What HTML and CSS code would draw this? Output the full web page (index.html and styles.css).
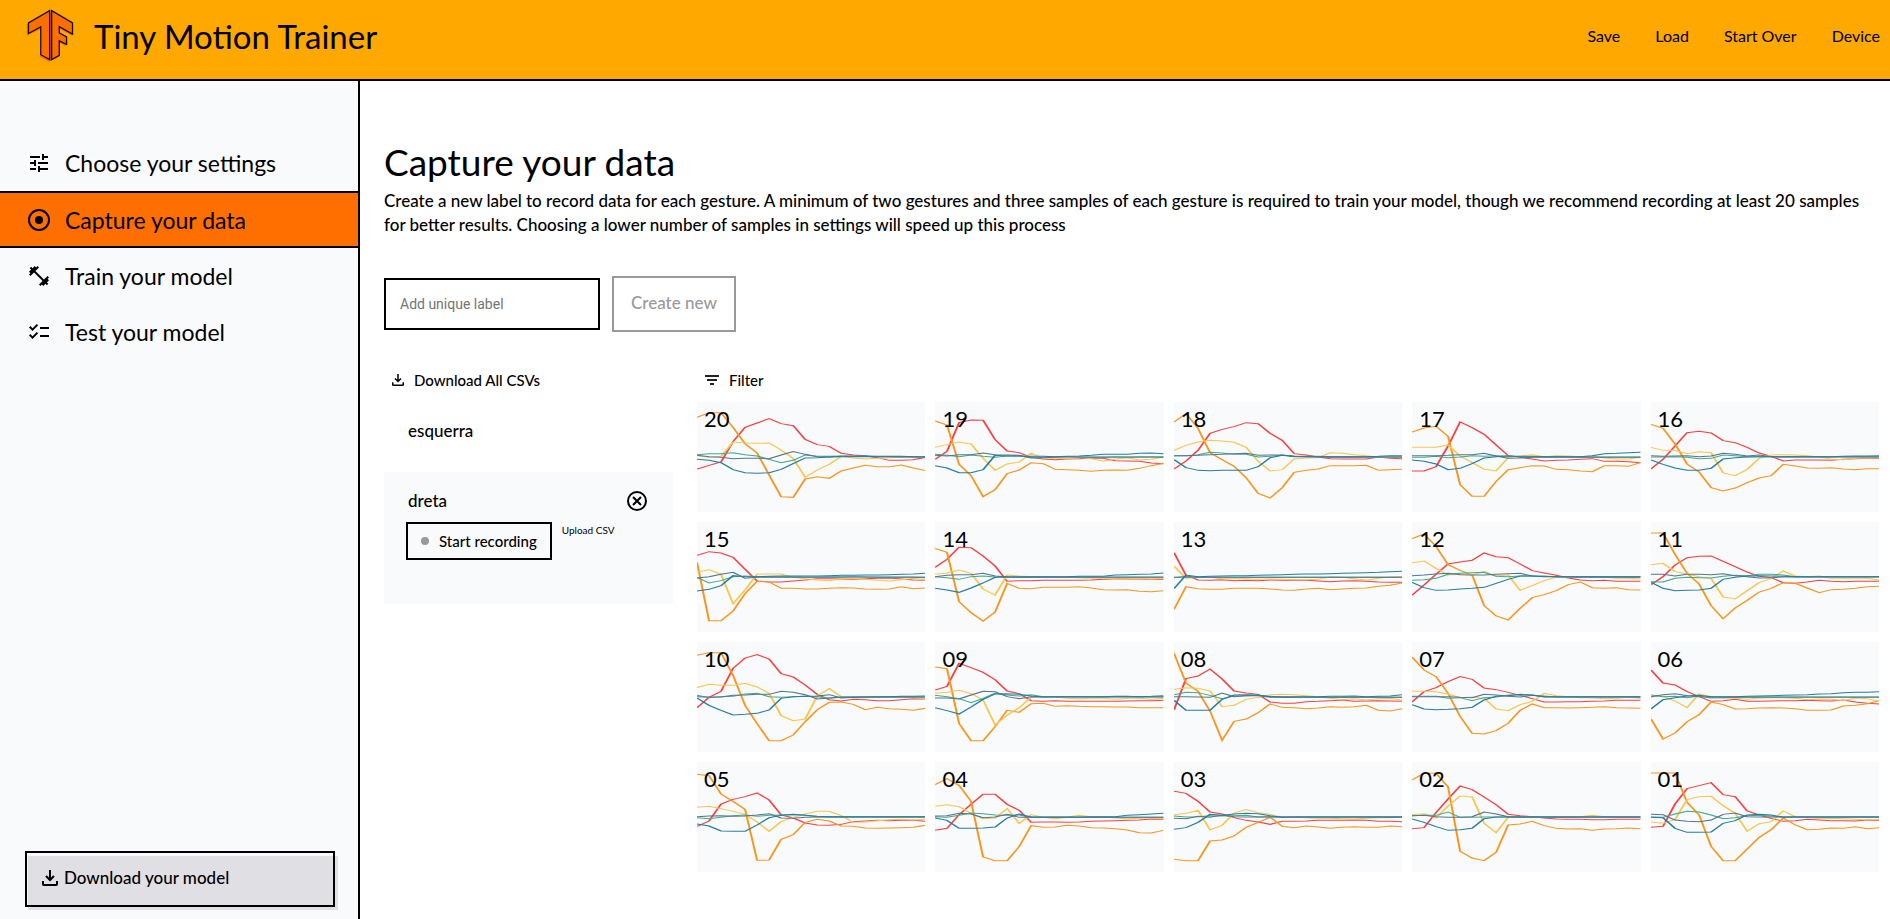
FILE: index.html
```html
<!DOCTYPE html>
<html lang="en">
<head>
<meta charset="utf-8">
<meta name="viewport" content="width=device-width, initial-scale=1">
<title>Tiny Motion Trainer</title>
<link rel="stylesheet" href="styles.css">
</head>
<body>
<svg class="sprite" aria-hidden="true">
  <symbol id="download" viewBox="0 0 16 16">
    <path d="M8 0v9M4 6l4 4 4-4M1 11v3.2q0 .8.8.8h12.4q.8 0 .8-.8V11" fill="none" stroke="currentColor" stroke-width="2"/>
  </symbol>
</svg>
<header class="topbar">
  <a class="brand" href="#">
    <svg class="logo" viewBox="78 24 144 160" aria-hidden="true">
      <g fill="#ff6f00" transform="translate(-2 5)">
        <path d="M150 28L82 66v34l40-20v84l28 14z"/>
        <path d="M150 28l68 38v34l-40-22v18l22 12v23l-22-11v44l-28 14z"/>
      </g>
      <g fill="#ff6f00" stroke="#1a0d00" stroke-width="4" stroke-linejoin="miter">
        <path d="M149 29L85 66v32l37-20v84l27 15z"/>
        <path d="M155 29l63 37v34l-40-23v19l22 12v23l-22-11v44l-23 13z"/>
      </g>
    </svg>
    <span class="brand-name">Tiny Motion Trainer</span>
  </a>
  <nav class="topnav" aria-label="Project">
    <a href="#">Save</a>
    <a href="#">Load</a>
    <a href="#">Start Over</a>
    <a href="#">Device</a>
  </nav>
</header>
<div class="layout">
  <aside class="sidebar">
    <nav class="steps" aria-label="Steps">
      <a class="step" href="#">
        <svg class="step-icon" viewBox="0 0 24 24" aria-hidden="true"><path d="M3 17v2h6v-2H3zM3 5v2h10V5H3zm10 16v-2h8v-2h-8v-2h-2v6h2zM7 9v2H3v2h4v2h2V9H7zm14 4v-2H11v2h10zm-6-4h2V7h4V5h-4V3h-2v6z"/></svg>
        Choose your settings
      </a>
      <a class="step step-active" href="#" aria-current="step">
        <svg class="step-icon" viewBox="0 0 24 24" aria-hidden="true"><circle cx="12" cy="12" r="10" fill="none" stroke="currentColor" stroke-width="2"/><circle cx="12" cy="12" r="4"/></svg>
        Capture your data
      </a>
      <a class="step" href="#">
        <svg class="step-icon" viewBox="0 0 24 24" aria-hidden="true"><path d="M20.57 14.86L22 13.43 20.57 12 17 15.57 8.43 7 12 3.43 10.57 2 9.14 3.43 7.71 2 5.57 4.14 4.14 2.71 2.71 4.14l1.43 1.43L2 7.71l1.43 1.43L2 10.57 3.43 12 7 8.43 15.57 17 12 20.57 13.43 22l1.43-1.43L16.29 22l2.14-2.14 1.43 1.43 1.43-1.43-1.43-1.43L22 16.29z"/></svg>
        Train your model
      </a>
      <a class="step" href="#">
        <svg class="step-icon" viewBox="0 0 24 24" aria-hidden="true"><path d="M22 7h-9v2h9V7zM22 15h-9v2h9v-2zM5.54 11L2 7.46l1.41-1.41 2.12 2.12 4.24-4.24 1.41 1.41L5.54 11zM5.54 19L2 15.46l1.41-1.41 2.12 2.12 4.24-4.24 1.41 1.41L5.54 19z"/></svg>
        Test your model
      </a>
    </nav>
    <div class="model-download">
      <button class="model-button" type="button"><svg class="icon-16" aria-hidden="true"><use href="#download"/></svg>Download your model</button>
    </div>
  </aside>
  <main class="content">
    <h1>Capture your data</h1>
    <p class="intro">Create a new label to record data for each gesture. A minimum of two gestures and three samples of each gesture is required to train your model, though we recommend recording at least 20 samples for better results. Choosing a lower number of samples in settings will speed up this process</p>
    <form class="label-form">
      <input class="label-input" type="text" placeholder="Add unique label" aria-label="Add unique label">
      <button class="create-button" type="button" disabled>Create new</button>
    </form>
    <div class="capture">
      <section class="labels">
        <button class="tool-button" type="button"><svg class="icon-12" aria-hidden="true"><use href="#download"/></svg>Download All CSVs</button>
        <div class="label-row"><h2>esquerra</h2></div>
        <div class="label-row label-selected">
          <div class="label-head">
            <h2>dreta</h2>
            <button class="close-button" type="button" aria-label="Delete label">
              <svg viewBox="0 0 20 20" aria-hidden="true"><circle cx="10" cy="10" r="9"/><path d="M6 6l8 8M14 6l-8 8"/></svg>
            </button>
          </div>
          <div class="label-actions">
            <button class="record-button" type="button"><span class="record-dot"></span>Start recording</button>
            <button class="upload-button" type="button">Upload CSV</button>
          </div>
        </div>
      </section>
      <section class="recordings">
        <button class="tool-button" type="button"><svg class="filter-icon" viewBox="0 0 14 10" aria-hidden="true"><path d="M0 1h14M2 5h10M5 9h4"/></svg>Filter</button>
        <div class="samples" id="samples"></div>
      </section>
    </div>
  </main>
</div>
<script src="samples.js"></script>
</body>
</html>
```
FILE: styles.css
```css
* { box-sizing: border-box; }
body {
  margin: 0;
  min-height: 100vh;
  display: flex;
  flex-direction: column;
  background: #fff;
  color: #000;
  font-family: Lato, "Open Sans", sans-serif;
  font-size: 17px;
  line-height: 24px;
}
a { color: inherit; text-decoration: none; }
button, input { font: inherit; color: inherit; }
button { background: none; border: 0; padding: 0; cursor: pointer; }
h1, h2, p { margin: 0; }
.sprite { position: absolute; width: 0; height: 0; }

.topbar {
  display: flex;
  align-items: center;
  justify-content: space-between;
  height: 81px;
  padding: 0 10px 8px 26px;
  background: #ffa800;
  border-bottom: 2px solid #000;
}
.brand { display: flex; align-items: center; gap: 20px; }
.logo { width: 48px; height: 53px; }
.brand-name { font-size: 33px; line-height: 40px; }
.topnav { display: flex; gap: 35px; font-size: 16px; }

.layout { flex: 1; display: flex; }
.sidebar {
  flex: none;
  width: 360px;
  display: flex;
  flex-direction: column;
  justify-content: space-between;
  padding: 54px 0 12px;
  background: #f8fafc;
  border-right: 2px solid #000;
}
.step {
  display: flex;
  align-items: center;
  gap: 14px;
  min-height: 56px;
  padding-left: 27px;
  font-size: 23px;
  line-height: 28px;
}
.step-icon { width: 24px; height: 24px; fill: currentColor; }
.step-active {
  min-height: 57px;
  background: #ff6f00;
  border: solid #000;
  border-width: 2px 0;
}
.model-download { position: relative; z-index: 0; margin: 0 23px 0 25px; }
.model-download::before {
  content: "";
  position: absolute;
  z-index: -1;
  inset: 5px -3px -3px 3px;
  background: #e0dfe4;
}
.model-button {
  display: flex;
  align-items: center;
  gap: 6px;
  width: 100%;
  height: 56px;
  padding: 0 15px 2px;
  border: 2px solid #000;
  font-weight: 500;
}
.icon-16 { width: 16px; height: 16px; }
.icon-12 { width: 12px; height: 12px; }

.content { flex: 1; min-width: 0; padding: 57px 11px 40px 24px; }
h1 { font-size: 37px; line-height: 48px; font-weight: 400; }
.intro { margin-top: 3px; font-weight: 500; }
.label-form { display: flex; align-items: center; gap: 12px; margin-top: 39px; }
.label-input {
  width: 216px;
  height: 52px;
  padding: 0 14px;
  border: 2px solid #000;
  background: #fff;
  font-family: Roboto, sans-serif;
  font-size: 14px;
}
.label-input::placeholder { color: #757575; opacity: 1; }
.create-button {
  height: 56px;
  padding: 0 17px 2px;
  border: 2px solid #999;
  color: #999;
  font-weight: 500;
}

.capture {
  display: grid;
  grid-template-columns: 289px minmax(0, 1fr);
  gap: 24px;
  margin-top: 36px;
}
.tool-button {
  display: flex;
  align-items: center;
  gap: 10px;
  height: 24px;
  margin-bottom: 10px;
  padding-left: 8px;
  font-size: 15px;
  font-weight: 500;
}
.label-row { height: 70px; padding: 17px 24px; }
.label-row h2 { font-size: 17px; line-height: 24px; font-weight: 500; }
.label-selected { height: 132px; background: #f8fafc; }
.label-head { display: flex; align-items: center; justify-content: space-between; padding-right: 2px; }
.close-button { width: 20px; height: 20px; }
.close-button svg { display: block; fill: none; stroke: #000; stroke-width: 2; }
.label-actions { display: flex; align-items: flex-start; gap: 10px; margin: 9px 0 0 -2px; }
.record-button {
  display: flex;
  align-items: center;
  gap: 10px;
  height: 38px;
  padding: 0 13px;
  border: 2px solid #000;
  font-size: 15px;
  font-weight: 500;
}
.record-dot { width: 8px; height: 8px; border-radius: 50%; background: #999; }
.upload-button { font-size: 10px; line-height: 16px; }
.filter-icon { width: 14px; height: 10px; fill: none; stroke: #222; stroke-width: 2; }

.samples { display: grid; grid-template-columns: repeat(5, minmax(0, 1fr)); gap: 10px; }
.sample { position: relative; height: 110px; background: #f8fafc; }
.sample svg { display: block; width: 100%; height: 100%; }
.sample-number { position: absolute; top: 3px; left: 7px; font-size: 22px; line-height: 28px; }
.sample polyline { fill: none; stroke-width: 3; }
.ax { stroke: #f94144; }
.ay { stroke: #f8961e; }
.az { stroke: #f9c74f; }
.gx { stroke: #43aa8b; }
.gy { stroke: #577590; }
.gz { stroke: #277da1; }
```
FILE: samples.js
```js
// Accelerometer (ax, ay, az) and gyroscope (gx, gy, gz) traces, 20 readings per recording.
// A shorter series holds its last reading to the end.
const recordings = {
  20: { ax: [-36,-25,-15,46,89,102,115,100,94,53,37,32,11,6,4,-2,-10,-10,-8,-1],
        ay: [119,133,133,89,40,12,-54,-119,-121,-66,-59,-64,-42,-33,-25,-29,-29,-24,-33,-41],
        az: [4,-1,2,45,42,41,42,21,-4,-61,-39,-22,2,-3,-6,-4,-2,-1,0,0],
        gx: [7,10,10,13,7,3,-7,-17,-10,6,2,2,3,3,2,1,1,1,1,0],
        gy: [5,1,-1,-5,-4,-4,-5,6,16,8,1,0,1,1,1,1,1,0,0,0],
        gz: [-7,-10,-17,-38,-47,-49,-47,-37,-20,-3,-2,0,2,2,3,2,2,2,1,0] },
  19: { ax: [-7,17,103,111,110,52,18,13,-1,-6,-8,-6,-5,-3,-4,-11,-12,-13,-18,-20],
        ay: [108,96,-22,-56,-119,-98,-50,-39,-17,-20,-37,-38,-40,-43,-40,-39,-40,-34,-26,-19],
        az: [29,37,45,39,-4,-40,-21,-15,11,-4,-3,-5,-1,-5,-13,-6,-2,-9,-7,0],
        gx: [8,5,1,6,2,-1,3,3,-1,-1,1,1,0,0,0,0,-1,0,0,1],
        gy: [5,3,7,7,12,7,6,5,-3,-2,-1,0,0,-1,-1,0,0,0,0,-1],
        gz: [-26,-33,-47,-47,-38,5,3,3,2,2,1,2,3,5,8,8,8,11,12,10] },
  18: { ax: [-36,-12,20,71,83,91,103,100,71,50,10,6,0,-5,-6,-6,-6,0,-4,-5],
        ay: [105,130,86,13,-8,-28,-62,-109,-123,-92,-46,-40,-36,-26,-26,-26,-25,-40,-38,-37],
        az: [20,35,45,50,48,44,29,-13,-42,-38,-6,-3,-2,13,11,7,4,-1,-1,-1],
        gx: [4,4,7,14,12,8,8,0,2,5,3,2,2,1,1,1,0],
        gy: [4,4,5,7,8,10,11,5,6,6,2,1,0,-1,-1,-1,0],
        gz: [-8,-32,-40,-41,-40,-40,-40,-29,-2,5,1,1,1,1,1,1,1,2,4,4] },
  17: { ax: [-42,-42,-29,33,105,88,68,36,4,-1,-6,-12,-10,-9,-7,-5,-13,-13,-14,-17],
        ay: [75,87,92,62,-83,-118,-118,-73,-38,-32,-26,-27,-37,-38,-42,-44,-26,-26,-28,-17],
        az: [29,29,29,36,3,-17,-37,-42,-2,3,7,1,4,3,1,3,-3,-6,-6,0],
        gx: [-1,-1,2,-2,0,4,2,4,3,2,2,1,1,1,1,0],
        gy: [4,4,4,5,7,7,11,3,-4,-3,-1],
        gz: [-9,-13,-21,-38,-34,-20,-3,1,3,1,1,1,1,1,1,4,10,11,13,14] },
  16: { ax: [-36,-7,33,73,77,72,49,43,29,12,2,-12,-9,-9,-9,-10,-7,-5,-4,-4],
        ay: [98,86,39,-21,-45,-92,-102,-93,-77,-63,-56,-22,-27,-33,-34,-32,-36,-38,-35,-35],
        az: [29,20,20,10,16,13,-48,-56,-37,-4,6,7,6,4,0,-6,-8,-4,-3,-2],
        gx: [0,0,1,-1,-5,-4,6,4,1,1],
        gy: [4,2,3,4,1,3,11,8,3,6,1,0],
        gz: [-9,-22,-33,-40,-40,-34,-6,-2,0,1,1,1,1,1,1,1,2,3,3,4] },
  15: { ax: [65,76,72,59,23,-12,-15,-15,-12,-9,-5,-5,-6,-7,-5,-4,-3,-6,-9,-10],
        ay: [44,-131,-131,-102,-50,-13,-15,-34,-34,-36,-36,-34,-32,-33,-36,-37,-36,-29,-35,-33],
        az: [14,22,8,-80,-39,9,9,9,-1,-5,-9,-11,-5,-4,-7,-10,-12,-8,-4,-9],
        gx: [-1,-18,-11,1,3,1,1,1,1,0,0,1,1,1,0],
        gy: [-3,1,8,14,-4,-1,-1,-1,-1,-1,-1,-1,-1,0,0,-1,-1,-1,-1,-2],
        gz: [-42,-37,-26,4,1,1,2,3,3,3,3,4,5,5,6,6,7,8,9,11] },
  14: { ax: [29,53,89,88,63,33,-13,-11,-11,-10,-10,-10,-10,-9,-7,-6,-5,-6,-7,-7],
        ay: [86,74,-74,-107,-132,-105,-19,-34,-35,-31,-31,-31,-29,-33,-38,-39,-38,-43,-44,-41],
        az: [8,12,21,11,-36,-54,6,3,1,0,-1,-1,-2,-4,-4,-7,-5,-4,-6,-4],
        gx: [1,-2,-7,1,3,0,-1,-1,0],
        gy: [1,5,7,7,11,3,0,-1],
        gz: [-34,-39,-46,-33,-18,-1,1,1,1,1,1,1,2,2,2,6,7,8,9,12] },
  13: { ax: [73,5,-9,-10,-8,-11,-10,-11,-9,-10,-9,-10,-12,-14,-12,-11,-13,-15,-16,-16],
        ay: [-97,-29,-35,-37,-37,-34,-34,-34,-36,-39,-40,-36,-34,-38,-36,-34,-33,-28,-25,-18],
        az: [33,-4,-1,-1,-5,-5,-5,-7,-6,-7,-8,-8,-7,1,-1,-5,-10,-4,0,1],
        gx: [-2,1,-1],
        gy: [-1,1,-1],
        gz: [-35,6,1,2,3,4,4,5,6,7,8,9,9,10,11,12,13,14,16,17] },
  12: { ax: [-55,-24,8,39,45,50,72,61,58,39,19,12,5,-3,-9,-11,-10,-13,-13,-13],
        ay: [115,129,92,37,20,6,-86,-117,-129,-94,-62,-53,-41,-23,-15,-32,-34,-32,-38,-39],
        az: [43,48,26,6,8,6,16,3,6,-40,-26,-11,0,-2,1,1,0,-4,-4,-6],
        gx: [-10,-8,-4,8,11,13,14,2,1,3,3,2,1],
        gy: [4,6,9,11,7,6,6,8,10,11,3,2,1,0,-1],
        gz: [-16,-32,-40,-39,-36,-34,-31,-19,-7,3,3,1] },
  11: { ax: [-23,1,36,58,62,63,47,31,15,2,-2,-17,-19,-15,-10,-13,-14,-13,-13,-13],
        ay: [132,132,68,11,-21,-86,-125,-93,-70,-45,-34,-17,-19,-33,-47,-38,-37,-34,-29,-28],
        az: [37,41,16,9,1,-4,-60,-66,-41,-17,-4,18,3,1,3,-4,-4,-4,-4,-9],
        gx: [-14,-15,-4,-1,-2,-3,2,5,4,8,8,6,1],
        gy: [8,8,3,8,8,7,10,4,1,-3,-2,0],
        gz: [-16,-34,-41,-40,-39,-34,-7,-1,3,4,3,2,1] },
  10: { ax: [-32,-1,17,86,117,127,114,70,60,36,8,-8,-12,-7,-8,-11,-11,-8,-5,-6],
        ay: [125,133,133,65,-25,-80,-131,-131,-114,-74,-38,-16,-15,-22,-38,-31,-35,-37,-40,-34],
        az: [28,38,35,35,41,30,11,-56,-71,-66,3,25,1,-2,-2,0,0,-1,-2,-4],
        gx: [5,-2,1,2,9,11,1,-1,1,2,1,-4,-1,0],
        gy: [1,0,0,5,6,8,8,17,14,7,-6,-3,0],
        gz: [-3,-25,-40,-54,-52,-49,-39,-4,1,2,3,7,-3,-1,0,1,1,2,2,3] },
  9:  { ax: [21,32,101,88,74,52,18,10,-11,-13,-11,-13,-13,-13,-13,-13,-12,-11,-11,-10],
        ay: [90,85,-79,-131,-131,-89,-40,-46,-20,-19,-28,-26,-28,-29,-29,-30,-30,-32,-32,-32],
        az: [11,14,20,10,-9,-84,-55,-32,-1,1,1,-4,-5,-4,-3,-7,-4,-4,-7,-4],
        gx: [5,1,-5,-17,-4,11,6,3,7,1],
        gy: [-3,-3,-6,6,17,16,1,-5,1,0],
        gz: [-32,-41,-51,-30,-7,9,10,8,3,0,1,1,1,1,1,2,2,1,2,4] },
  8:  { ax: [-39,55,63,84,54,18,12,8,-15,-19,-19,-14,-13,-11,-9,-13,-12,-11,-12,-13],
        ay: [131,42,17,-42,-130,-73,-66,-47,-21,-31,-32,-35,-33,-29,-31,-29,-25,-40,-42,-35],
        az: [23,28,26,18,-29,-25,-7,-1,7,8,7,4,1,-4,-8,-5,-9,-5,-4,-9],
        gx: [7,14,13,5,-5,3,4,5,2,-1],
        gy: [1,1,0,-1,12,1,4,4,-1],
        gz: [-10,-40,-40,-40,-7,6,7,6,1,1,1,1,1,2,2,3,1,2,3,7] },
  7:  { ax: [-15,16,28,46,61,53,27,22,14,5,-5,-15,-15,-14,-14,-13,-12,-10,-10,-10],
        ay: [120,81,61,11,-58,-109,-111,-101,-79,-40,-21,-32,-32,-33,-32,-31,-29,-32,-33,-34],
        az: [17,17,16,9,-2,0,-4,-36,-41,-23,-13,11,4,1,-2,-2,-5,-4,-1,-4],
        gx: [2,2,2,-4,-2,-11,-2,0,6,6,5,3,0],
        gy: [1,1,1,1,-1,-2,8,6,2,0,5,0],
        gz: [-23,-36,-38,-37,-35,-31,-9,2,4,8,6,1] },
  6:  { ax: [81,42,36,16,1,-13,-11,-7,-13,-13,-12,-11,-11,-10,-11,-12,-9,-15,-19,-21],
        ay: [-66,-126,-108,-74,-53,-15,-23,-36,-35,-33,-32,-33,-35,-40,-40,-39,-27,-25,-20,-11],
        az: [1,2,-12,-32,9,1,-3,-4,-7,-3,-2,-2,-4,-8,-6,-7,-11,-3,-5,-13],
        gx: [6,1,2,-2,3,-3,-2,-1],
        gy: [1,7,10,4,1,0],
        gz: [-36,-8,-2,3,5,1,1,1,2,3,4,5,6,7,9,10,13,14,14,16] },
  5:  { ax: [-28,-12,39,53,61,72,51,6,-3,-18,-24,-25,-22,-14,-12,-10,-11,-10,-10,-13],
        ay: [128,124,69,47,23,-130,-129,-67,-53,-16,-7,-12,-27,-28,-33,-34,-33,-32,-31,-25],
        az: [29,32,25,17,8,-15,-43,-14,-1,9,17,17,4,-16,-15,-11,-8,-7,-9,-7],
        gx: [-2,-5,-1,4,6,2,5,6,7,5,1,0],
        gy: [1,3,4,2,3,6,10,-3,-4,-1,0],
        gz: [-21,-27,-42,-43,-43,-24,-2,5,8,5,2,1] },
  4:  { ax: [-40,-34,7,38,68,68,38,20,-16,-15,-15,-16,-15,-13,-12,-11,-10,-9,-6,-7],
        ay: [97,115,95,47,-120,-131,-131,-89,-26,-31,-30,-25,-27,-32,-33,-35,-39,-47,-48,-40],
        az: [32,37,31,11,-5,-3,25,-19,7,-1,-5,-1,5,1,0,-3,-5,-4,-2,-5],
        gx: [1,-1,5,12,10,6,5,6,-1],
        gy: [3,4,11,9,-2,0,8,-1],
        gz: [-3,-10,-34,-34,-33,-30,-3,9,0,0,0,0,0,1,1,1,5,7,9,11] },
  3:  { ax: [77,71,47,15,9,-2,-10,-15,-22,-13,-13,-12,-10,-10,-10,-9,-10,-13,-13,-14],
        ay: [-127,-131,-131,-72,-69,-57,-31,-16,-1,-28,-32,-27,-30,-34,-31,-29,-31,-31,-27,-29],
        az: [7,11,20,-39,-25,12,22,13,8,-2,-1,-2,-4,-4,-5,-6,-4,-2,-2,-1],
        gx: [3,0,1,4,3,4,5,0,1,0],
        gy: [-4,-5,2,-1,6,1,0],
        gz: [-37,-32,-16,8,5,9,11,10,4,-1,0] },
  2:  { ax: [-35,-32,13,54,93,82,60,37,8,4,1,-3,-6,-7,-7,-8,-8,-7,-7,-7],
        ay: [111,131,131,90,-103,-123,-131,-106,-24,-21,-13,-26,-34,-36,-35,-40,-36,-35,-33,-35],
        az: [7,10,-3,33,63,60,-19,-47,-1,0,-1,-1,-1,0,1,5,1,-1],
        gx: [4,5,5,15,-1,-1,0],
        gy: [4,5,1,-1,-1,1,15,9,1,0],
        gz: [-6,-16,-29,-40,-38,-34,-5,0] },
  1:  { ax: [-31,-28,39,85,94,103,67,61,18,6,-4,-13,-11,-7,-9,-11,-11,-12,-9,-10],
        ay: [132,132,132,44,6,-88,-131,-131,-96,-61,-38,-3,-24,-38,-37,-33,-34,-29,-35,-32],
        az: [-15,-19,-7,52,61,62,34,11,-43,-20,-14,18,1,-1,-5,-4,-5,-7,-9,-7],
        gx: [0,-1,9,17,15,6,-5,-2,4,5,3,0],
        gy: [8,7,-9,-13,-14,-9,8,12,1,0],
        gz: [-1,-2,-34,-46,-46,-45,-19,-11,6,8,6,-1,0] }
};

const READINGS = 20;
const STEP = 18;
const CENTER = 165;

function trace(name, series) {
  const points = [];
  for (let i = 0; i < READINGS; i++) {
    const value = series[Math.min(i, series.length - 1)];
    points.push(i * STEP + "," + (CENTER - value));
  }
  return '<polyline class="' + name + '" points="' + points.join(" ") + '"/>';
}

document.getElementById("samples").innerHTML = Object.keys(recordings)
  .sort((a, b) => b - a)
  .map(id => {
    const lines = Object.entries(recordings[id]).map(([name, series]) => trace(name, series)).join("");
    return '<div class="sample"><svg viewBox="0 0 342 330" preserveAspectRatio="none" aria-hidden="true">' +
      lines + '</svg><span class="sample-number">' + id.padStart(2, "0") + "</span></div>";
  })
  .join("");
```
